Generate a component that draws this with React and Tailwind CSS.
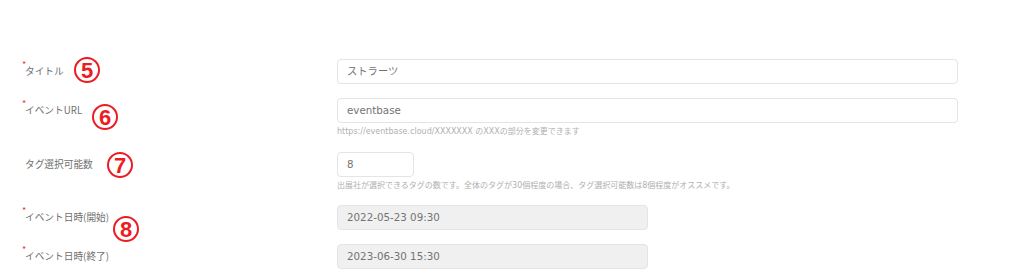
const font = { fontFamily: '"Noto Sans CJK JP", "Noto Sans", sans-serif' };

const Badge = ({ n, className }) => (
  <div
    className={`absolute flex h-[26px] w-[26px] items-center justify-center rounded-full border-2 border-[#ec1c24] pt-[1px] text-[22px] font-bold leading-none text-[#ec1c24] ${className}`}
    style={{ fontFamily: '"Liberation Sans", Arial, sans-serif' }}
  >
    {n}
  </div>
);

const Label = ({ text, required }) => (
  <div className="relative w-[315px] shrink-0 pl-[3px] text-[9.7px] text-[#6f6f6f]">
    {required && <span className="absolute left-0 top-[-6px] text-[9px] text-[#e53935]">*</span>}
    {text}
  </div>
);

const Field = ({ value, width = 'w-[621px]', disabled }) => (
  <div
    className={`flex h-[25px] ${width} items-center rounded-[4px] border border-[#e3e3e8] px-[9px] text-[10.3px] text-[#737373] ${
      disabled ? 'bg-[#f0f0f0]' : 'bg-white'
    }`}
    style={{ fontFamily: '"DejaVu Sans", "Noto Sans CJK JP", sans-serif' }}
  >
    {value}
  </div>
);

const Help = ({ children }) => (
  <div className="mt-[3px] text-[8px] leading-[12px] text-[#b0b0b0]" style={{ fontFamily: '"DejaVu Sans", "Noto Sans CJK JP", sans-serif' }}>
    {children}
  </div>
);

const App = () => {
  return (
    <div className="relative h-[275px] w-[1024px] overflow-hidden bg-white pl-[22px] pt-[59px]" style={font}>
      <div className="flex items-center">
        <Label text="タイトル" required />
        <Field value="ストラーツ" />
      </div>

      <div className="mt-[14px] flex items-start">
        <div className="flex h-[25px] items-center">
          <Label text="イベントURL" required />
        </div>
        <div>
          <Field value="eventbase" />
          <Help>https://eventbase.cloud/XXXXXXX のXXXの部分を変更できます</Help>
        </div>
      </div>

      <div className="mt-[14px] flex items-start">
        <div className="flex h-[24px] items-center">
          <Label text="タグ選択可能数" />
        </div>
        <div>
          <Field value="8" width="w-[77px]" />
          <Help>出展社が選択できるタグの数です。全体のタグが30個程度の場合、タグ選択可能数は8個程度がオススメです。</Help>
        </div>
      </div>

      <div className="mt-[13px] flex items-center">
        <Label text="イベント日時(開始)" required />
        <Field value="2022-05-23 09:30" width="w-[311px]" disabled />
      </div>

      <div className="mt-[14px] flex items-center">
        <Label text="イベント日時(終了)" required />
        <Field value="2023-06-30 15:30" width="w-[311px]" disabled />
      </div>

      <Badge n="5" className="left-[74px] top-[57px]" />
      <Badge n="6" className="left-[92px] top-[104px]" />
      <Badge n="7" className="left-[107px] top-[152px]" />
      <Badge n="8" className="left-[113px] top-[216px]" />
    </div>
  );
};

export default App;
